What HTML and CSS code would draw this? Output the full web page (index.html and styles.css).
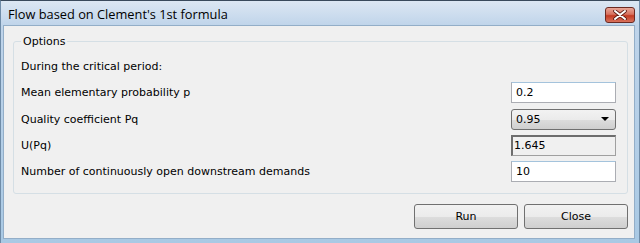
FILE: index.html
```html
<!DOCTYPE html>
<html lang="en">
<head>
<meta charset="UTF-8" />
<title>Flow based on Clement's 1st formula</title>
<link rel="stylesheet" href="styles.css">
</head>
<body>

<div class="window">
  <div class="titlebar">
    <span class="title">Flow based on Clement's 1st formula</span>
    <button class="close-btn" aria-label="Close">
      <svg width="14" height="10" viewBox="0 0 14 10">
        <path d="M2 1 L12 9 M12 1 L2 9" stroke="#5a1a12" stroke-width="3.6" stroke-linecap="round"/>
        <path d="M2 1 L12 9 M12 1 L2 9" stroke="#fff" stroke-width="2" stroke-linecap="round"/>
      </svg>
    </button>
  </div>

  <div class="client">
    <fieldset class="group">
      <legend>Options</legend>
      <div class="row">
        <span class="label">During the critical period:</span>
      </div>
      <div class="row">
        <span class="label">Mean elementary probability p</span>
        <div class="field">0.2</div>
      </div>
      <div class="row">
        <span class="label">Quality coefficient Pq</span>
        <div class="field combo">0.95<span class="arrow"></span></div>
      </div>
      <div class="row">
        <span class="label">U(Pq)</span>
        <div class="field readonly">1.645</div>
      </div>
      <div class="row">
        <span class="label">Number of continuously open downstream demands</span>
        <div class="field">10</div>
      </div>
    </fieldset>

    <div class="buttons">
      <button class="btn">Run</button>
      <button class="btn">Close</button>
    </div>
  </div>
</div>

</body>
</html>
```

FILE: styles.css
```css
html, body {
  margin: 0;
  padding: 0;
}
body {
  width: 640px;
  height: 243px;
  overflow: hidden;
  background: #9dc0dd;
}
.window {
  box-sizing: border-box;
  width: 640px;
  height: 243px;
  border-top: 1px solid #3a4a5c;
  border-left: 1px solid #6f8ca8;
  border-right: 1px solid #6f8ca8;
  background: linear-gradient(to bottom, #dce7f3 0px, #bfd4ea 25px, #a9c9e4 100%);
  padding: 0 4px 4px 2px;
  display: flex;
  flex-direction: column;
}
.titlebar {
  height: 24px;
  display: flex;
  align-items: center;
  justify-content: space-between;
  padding: 0 0 0 5px;
}
.title {
  font-family: "Open Sans", "Noto Sans", sans-serif;
  font-size: 12.8px;
  color: #000;
  padding-top: 2px;
}
.close-btn {
  width: 30px;
  height: 16px;
  margin-top: 3px;
  border: 1px solid #6b2a22;
  border-radius: 3px;
  background: linear-gradient(to bottom, #e8a697 0%, #d7715f 45%, #c33a22 55%, #d8715b 100%);
  display: flex;
  align-items: center;
  justify-content: center;
  padding: 0;
}
.client {
  flex: 1;
  background: #f0f0f0;
  border: 1px solid #93aec8;
  padding: 9px 6px 0 9px;
  font-family: "DejaVu Sans", Verdana, sans-serif;
  font-size: 11px;
  color: #000;
}
.group {
  margin: 0;
  border: 1px solid #d5dfe5;
  border-radius: 3px;
  padding: 8px 11px 11px 7px;
  display: flex;
  flex-direction: column;
  gap: 5.25px;
}
.group legend {
  padding: 0 2px;
  margin-left: 0;
  font-size: 11px;
}
.row {
  height: 21px;
  display: flex;
  align-items: center;
  justify-content: space-between;
}
.field {
  box-sizing: border-box;
  width: 105px;
  height: 21px;
  border: 1px solid #abadb3;
  border-top-color: #a4c3dc;
  background: #fff;
  padding: 0 4px;
  display: flex;
  align-items: center;
}
.field.combo {
  border: 1px solid #707070;
  border-radius: 3px;
  background: linear-gradient(to bottom, #f2f2f2 0%, #ebebeb 50%, #dddddd 51%, #cfcfcf 100%);
  justify-content: space-between;
  padding: 0 6px 0 4px;
}
.arrow {
  width: 0;
  height: 0;
  border-left: 4px solid transparent;
  border-right: 4px solid transparent;
  border-top: 4px solid #000;
}
.field.readonly {
  background: #f0f0f0;
  border: 1px solid #a0a0a0;
  border-left: 2px solid #6d6d6d;
  border-top: 2px solid #6d6d6d;
  padding-left: 1px;
}
.buttons {
  display: flex;
  justify-content: flex-end;
  gap: 6px;
  margin-top: 10px;
  margin-right: 0;
}
.btn {
  width: 104px;
  height: 25px;
  border: 1px solid #707070;
  border-radius: 3px;
  background: linear-gradient(to bottom, #f2f2f2 0%, #ebebeb 50%, #dddddd 51%, #cfcfcf 100%);
  font-family: "DejaVu Sans", Verdana, sans-serif;
  font-size: 11px;
  color: #000;
  padding: 0;
}
```
